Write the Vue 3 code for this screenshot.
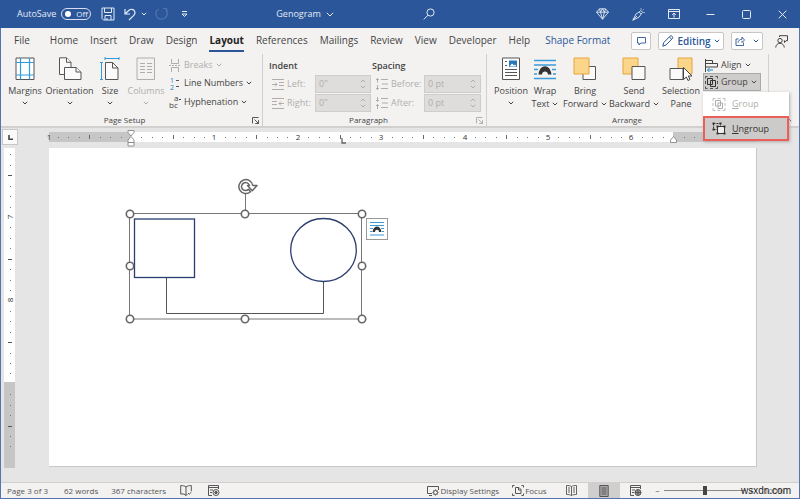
<script setup>
import { h, ref } from 'vue'

const Chevron = () =>
  h('svg', { width: 6, height: 4, viewBox: '0 0 6 4', fill: 'none', stroke: 'currentColor', 'aria-hidden': 'true' }, [
    h('path', { d: 'M.8.8 3 3 5.2.8' }),
  ])

const Launcher = () =>
  h('svg', { width: 7, height: 7, viewBox: '0 0 7 7', fill: 'none', stroke: 'currentColor', 'stroke-width': '.9', 'aria-hidden': 'true' }, [
    h('path', { d: 'M.5 6.5v-6h6M2.5 2.5l4 4M6.5 3.2v3.3H3.2' }),
  ])

const tabs = ['Home', 'Insert', 'Draw', 'Design', 'Layout', 'References', 'Mailings', 'Review', 'View', 'Developer', 'Help']
const activeTab = ref('Layout')
const menuOpen = ref(true)
const zoom = ref(100)

const inch = 83.4
const marks = (origin, from, to) => {
  const list = []
  for (let i = from; i <= to; i++) {
    const kind = i % 8 === 0 ? 'number' : i % 4 === 0 ? 'bar' : 'dot'
    list.push({ at: Math.round(origin + (i * inch) / 8), kind, label: Math.abs(i / 8) })
  }
  return list
}
const acrossMarks = marks(82, -7, 59).filter((m) => m.label !== 0 && m.label !== 6.5)
const downMarks = marks(69 - 7 * inch, 50, 78).filter((m) => m.at > 3 && m.label !== 9 && m.label < 9.8)

const handles = [
  [81, 66], [196, 66], [313, 66],
  [81, 118], [313, 118],
  [81, 171], [196, 171], [313, 171],
]
</script>

<template>
  <div class="window">
    <header class="titlebar">
      <label class="autosave">AutoSave
        <button class="toggle" type="button" role="switch" aria-checked="false"><i></i>Off</button>
      </label>
      <button class="quick save" type="button" aria-label="Save">
        <svg width="14" height="14" viewBox="0 0 14 14" fill="none" stroke="currentColor"><path d="M1 1h12v12H2.500L1 11.500zM3.500 1v4.500h7V1M4 13V8.500h6V13M6 13v-2" /></svg>
      </button>
      <button class="quick undo" type="button" aria-label="Undo">
        <svg width="12" height="13" viewBox="0 0 12 13" fill="none" stroke="currentColor" stroke-width="1.200"><path d="M1 1v5h5M1.300 5.700 5 2.200c2-1.600 4.300-1 5.300.5 1 1.600.8 3.300-.5 4.600L5 12" /></svg>
        <Chevron />
      </button>
      <button class="quick redo" type="button" aria-label="Repeat" disabled>
        <svg width="13" height="14" viewBox="0 0 13 14" fill="none" stroke="currentColor" stroke-width="1.200"><path d="M8 1.500h3.500V5M11.300 2.200C13 5 12.500 9 10 11c-3 2.300-7 1.200-8.500-1.800C.2 6.500 1.200 3.500 3.500 2" /></svg>
      </button>
      <button class="quick" type="button" aria-label="Customize toolbar">
        <svg width="7" height="7" viewBox="0 0 7 7" fill="none" stroke="currentColor"><path d="M1 .5h5M1 3l2.500 2.500L6 3z" /></svg>
      </button>
      <button class="doc-name" type="button">Genogram
        <svg width="8" height="5" viewBox="0 0 8 5" fill="none" stroke="currentColor"><path d="M.8.8 4 4 7.200.8" /></svg>
      </button>
      <button class="quick search" type="button" aria-label="Search">
        <svg width="12" height="12" viewBox="0 0 12 12" fill="none" stroke="currentColor"><circle cx="7.500" cy="4.500" r="3.600" /><path d="M5 7.200.8 11.400" /></svg>
      </button>
      <nav class="window-buttons" aria-label="Window">
        <button type="button" aria-label="Premium">
          <svg width="13" height="12" viewBox="0 0 13 12" fill="none" stroke="currentColor" stroke-width=".9"><path d="M3.500.8h6l3 3.400-6 7-6-7zM.5 4.200h12M3.500.8l1 3.400 2 7 2-7 1-3.400M4.500 4.200l2-3.400 2 3.400" /></svg>
        </button>
        <button type="button" aria-label="Designer">
          <svg width="13" height="13" viewBox="0 0 13 13" fill="none" stroke="currentColor" stroke-width=".9"><path d="M.8 12.200 4 6l3.200-2 2 2L7 9.200zM.8 12.200 5 8M7.200 4 8.700 2.500l2 2L9.200 6M9 1.500V.3M11.500 1.500l-.8.8M11.500 4.500h1.200" /></svg>
        </button>
        <button type="button" aria-label="Ribbon display options">
          <svg width="12" height="10" viewBox="0 0 12 10" fill="none" stroke="currentColor"><path d="M.5.5h11v9H.5zM.5 2.500h11M6 8.500V4.200M4.200 5.800 6 4l1.800 1.800" /></svg>
        </button>
        <button type="button" aria-label="Minimize">
          <svg width="9" height="9" viewBox="0 0 9 9" stroke="currentColor"><path d="M.5 4.500h8" /></svg>
        </button>
        <button type="button" aria-label="Maximize">
          <svg width="9" height="9" viewBox="0 0 9 9" fill="none" stroke="currentColor"><rect x=".5" y=".5" width="8" height="8" rx="1" /></svg>
        </button>
        <button type="button" aria-label="Close">
          <svg width="9" height="9" viewBox="0 0 9 9" fill="none" stroke="currentColor"><path d="m.7.7 7.600 7.600M8.300.7.7 8.300" /></svg>
        </button>
      </nav>
    </header>

    <nav class="tabs" aria-label="Ribbon tabs">
      <button class="tab file" type="button">File</button>
      <button v-for="t in tabs" :key="t" class="tab" :class="{ active: t === activeTab }" type="button" @click="activeTab = t">{{ t }}</button>
      <button class="tab context" type="button">Shape Format</button>
      <div class="tab-actions">
        <button class="boxed comment" type="button" aria-label="Comments">
          <svg width="9" height="9" viewBox="0 0 9 9" fill="none" stroke="currentColor" stroke-width=".9"><path d="M.5.5h8v5.500H4L2 8V6H.5z" /></svg>
        </button>
        <button class="boxed editing" type="button">
          <svg width="12" height="12" viewBox="0 0 12 12" fill="none" stroke="currentColor"><path d="m.8 11.200.9-3.600L8.300 1c1-.9 3.200 1 2.300 2.300L4 10zM7.300 2l2.500 2.300" /></svg>
          Editing<Chevron />
        </button>
        <button class="boxed share" type="button" aria-label="Share">
          <svg width="10" height="10" viewBox="0 0 10 10" fill="none" stroke="currentColor" stroke-width=".9"><path d="M3.500 3H1v6.500h7.500V6.500M3 6.800c.3-2.500 2-3.500 4-3.500V1l2.500 3L7 6.500V4.800" /></svg>
          <Chevron />
        </button>
        <button class="person" type="button" aria-label="Presence">
          <svg width="13" height="13" viewBox="0 0 13 13" fill="none" stroke="currentColor"><path d="M4.500 2V.7h8v5H11L9.500 7.500V5.700H8.800M.7 12.500C1 9.500 3 8.300 5 8.300s4 1.200 4.300 4.200" /><circle cx="5" cy="5.600" r="2.200" /></svg>
        </button>
      </div>
    </nav>

    <section class="ribbon">
      <div class="group page-setup">
        <div class="group-body">
          <button class="big margins" type="button">
            <svg width="20" height="24" viewBox="0 0 20 24" fill="none"><path d="M1 1h18v21.500H1z" fill="#fff" stroke="#555" /><path d="M5.500 1v21.500M14.500 1v21.500M1 5.500h18M1 18h18" stroke="#2f9bd8" stroke-width="1.200" /></svg>
            <span>Margins</span><Chevron />
          </button>
          <button class="big orientation" type="button">
            <svg width="24" height="24" viewBox="0 0 24 24" fill="#fafafa" stroke="#555"><path d="M1.500 17.500V.8h7l4.500 4.500v12.200z" /><path d="M8.500.8v4.500H13" /><path d="M6.500 22.500v-12H18l5 4.500v7.500z" /><path d="M18 10.500V15h5" /></svg>
            <span>Orientation</span><Chevron />
          </button>
          <button class="big size" type="button">
            <svg width="20" height="24" viewBox="0 0 20 24" fill="none"><path d="M5.500 22.500V5.500h7L18 11v11.500z" fill="#fafafa" stroke="#555" /><path d="M12.500 5.500V11H18" stroke="#555" /><path d="M5 1.500h14M5 0v3M19 0v3M1.500 5v18M0 5.500h3M0 22.500h3" stroke="#2f9bd8" /></svg>
            <span>Size</span><Chevron />
          </button>
          <button class="big columns" type="button" disabled>
            <svg width="20" height="24" viewBox="0 0 20 24" fill="none" stroke="currentColor"><path d="M1 1h17.500v21.500H1z" /><path d="M4 6.500h5M4 9.500h5M4 12.500h5M4 15.500h5M11 6.500h5M11 9.500h5M11 12.500h5M11 15.500h5" /></svg>
            <span>Columns</span><Chevron />
          </button>
          <div class="small-list">
            <button class="small" type="button" disabled>
              <svg width="12" height="13" viewBox="0 0 12 13" fill="none" stroke="currentColor"><path d="M2.500 0v4.500h7V0M2.500 13V8.500h7V13" /><path d="M0 6.500h12" stroke-dasharray="2 1" /></svg>
              Breaks<Chevron />
            </button>
            <button class="small" type="button">
              <svg class="glyphs" width="12" height="13" viewBox="0 0 12 13"><text x="1" y="6" font-size="7" fill="#1787cc">1</text><text x="1" y="13" font-size="7" fill="#1787cc">2</text><path d="M7 3.500h3M7 9.500h3" stroke="#555" /></svg>
              Line Numbers<Chevron />
            </button>
            <button class="small" type="button">
              <svg class="glyphs" width="12" height="13" viewBox="0 0 12 13" fill="#444"><text x="5" y="5" font-size="8">a</text><text x="0" y="12" font-size="8">bc</text><path d="M10 3.500h2" stroke="#444" /></svg>
              Hyphenation<Chevron />
            </button>
          </div>
        </div>
        <footer><span>Page Setup</span><button class="launcher" type="button" aria-label="Page setup options"><Launcher /></button></footer>
      </div>

      <div class="group paragraph">
        <div class="group-body fields">
          <strong class="field-title">Indent</strong>
          <strong class="field-title">Spacing</strong>
          <label class="field" for="left">
            <svg width="12" height="11" viewBox="0 0 12 11" fill="none" stroke="currentColor"><path d="M0 .5h12M7 3.500h5M7 6.500h5M0 10.500h12M0 5.500h5M3 3.500l2 2-2 2" /></svg>
            <span>Left:</span>
            <span class="spin"><input id="left" value='0"' disabled /><i><Chevron class="up" /><Chevron /></i></span>
          </label>
          <label class="field" for="before">
            <svg width="13" height="12" viewBox="0 0 13 12" fill="none" stroke="currentColor"><path d="M6 1.500h7M7 6h6M6 10.500h7M2.500 0v4.500M1 2l1.500-1.500L4 2M2.500 12V7M1 10l1.500 1.500L4 10" /></svg>
            <span class="wide">Before:</span>
            <span class="spin"><input id="before" value="0 pt" disabled /><i><Chevron class="up" /><Chevron /></i></span>
          </label>
          <label class="field" for="right">
            <svg width="12" height="11" viewBox="0 0 12 11" fill="none" stroke="currentColor"><path d="M0 .5h12M0 3.500h5M0 6.500h5M0 10.500h12M7 5.500h5M9 3.500l-2 2 2 2" /></svg>
            <span>Right:</span>
            <span class="spin"><input id="right" value='0"' disabled /><i><Chevron class="up" /><Chevron /></i></span>
          </label>
          <label class="field" for="after">
            <svg width="13" height="12" viewBox="0 0 13 12" fill="none" stroke="currentColor"><path d="M6 1.500h7M7 6h6M6 10.500h7M2.500 0v4.500M1 3l1.500 1.500L4 3M2.500 12V7M1 9l1.500-1.500L4 9" /></svg>
            <span class="wide">After:</span>
            <span class="spin"><input id="after" value="0 pt" disabled /><i><Chevron class="up" /><Chevron /></i></span>
          </label>
        </div>
        <footer><span>Paragraph</span><button class="launcher dim" type="button" aria-label="Paragraph options"><Launcher /></button></footer>
      </div>

      <div class="group arrange">
        <div class="group-body">
          <button class="big position" type="button">
            <svg width="20" height="24" viewBox="0 0 20 24" fill="none"><path d="M1.500 1h17v21.500h-17z" fill="#fff" stroke="#555" /><path d="M8 3.500h8V10H8z" fill="#2878b8" /><path d="m8.500 9.500 2.500-3 2 2 1-1 1.500 2z" fill="#fff" /><path d="M4 4.500h2M4 8.500h2M4 12.500h12M4 15.500h12M4 18.500h12" stroke="#555" /></svg>
            <span>Position</span><Chevron />
          </button>
          <button class="big wrap" type="button">
            <svg width="24" height="24" viewBox="0 0 24 24" fill="none"><path d="M1 3.500h22M1 8h22M1 12.500h4M19 12.500h4M1 17h3M20 17h3M1 21.500h22" stroke="#3a9bd9" stroke-width="1.300" /><path d="M5.500 17.500h3.500c0-4 6-4 6 0h3.500c-1-11-12-11-13 0z" fill="#333" /></svg>
            <span>Wrap</span><span>Text<Chevron /></span>
          </button>
          <button class="big forward" type="button">
            <svg width="24" height="24" viewBox="0 0 24 24"><path d="M10 9.500h12.500v13H10z" fill="#fafafa" stroke="#555" /><path d="M1 1h15v16H1z" fill="#fbd68a" stroke="#e8a33c" /></svg>
            <span>Bring</span><span>Forward<Chevron /></span>
          </button>
          <button class="big backward" type="button">
            <svg width="24" height="24" viewBox="0 0 24 24"><path d="M1 1h15v16H1z" fill="#fbd68a" stroke="#e8a33c" /><path d="M10 9.500h13v13H10z" fill="#fafafa" stroke="#555" /></svg>
            <span>Send</span><span>Backward<Chevron /></span>
          </button>
          <button class="big selection" type="button">
            <svg width="24" height="24" viewBox="0 0 24 24"><path d="M9 1h14v16H9z" fill="#fbd68a" stroke="#e8a33c" /><path d="M1 11.500h13v11H1z" fill="#fafafa" stroke="#555" /><path d="M14.500 10.500v12l2.800-2.500 1.700 3.500 2-1-1.700-3.500h3.700z" fill="#fff" stroke="#444" /></svg>
            <span>Selection</span><span>Pane</span>
          </button>
          <div class="arrange-list">
            <button class="small align" type="button">
              <svg width="13" height="13" viewBox="0 0 13 13" fill="none"><path d="M.5 0v13M.5 1.500h7v3h-7zM.5 4.500h12V8H.5z" stroke="#444" /><path d="M2.500 11h5.500M4.500 9l-2 2 2 2" stroke="#1787cc" /></svg>
              Align<Chevron />
            </button>
            <div class="menu-anchor">
              <button class="small group-button" type="button" :aria-expanded="menuOpen" @click="menuOpen = !menuOpen">
                <svg width="13" height="13" viewBox="0 0 13 13" fill="none" stroke="#333"><path d="M.5 2.500v-2h2M10.500.5h2v2M12.500 10.500v2h-2M2.500 12.500h-2v-2M5 .5h3M5 12.500h3M.5 5v3M12.500 5v3" stroke-width=".8" /><path d="M2.500 2.500h5v6h-5zM5.500 4.500h5v6h-5z" /></svg>
                Group<Chevron />
              </button>
              <div v-if="menuOpen" class="menu" role="menu">
                <button class="item" type="button" role="menuitem" disabled>
                  <svg width="14" height="13" viewBox="0 0 14 13" fill="none" stroke="currentColor"><path d="M1 3V.5h2.500M10.500.5H13V3M13 10v2.500h-2.500M3.500 12.500H1V10M5.500.5h3M5.500 12.500h3M1 5v3M13 5v3" stroke-width=".8" /><path d="M3.500 2.500h5v5.500h-5zM6 5h4.500v5.500H6z" /></svg>
                  <span><u>G</u>roup</span>
                </button>
                <button class="item current" type="button" role="menuitem">
                  <svg width="14" height="13" viewBox="0 0 14 13" fill="none" stroke="#333"><path d="M1.500 1.500h7v6h-7z" stroke-dasharray="2 1" /><path d="M5.500 4.500h7v7h-7z" fill="#eee" /><path d="M.5.500h2v2h-2zM7.500.500h2v2h-2zM.5 6.500h2v2h-2zM4.500 3.500h2v2h-2zM11.500 3.500h2v2h-2zM4.500 10.500h2v2h-2zM11.500 10.500h2v2h-2z" fill="#333" stroke="none" /></svg>
                  <span><u>U</u>ngroup</span>
                </button>
              </div>
            </div>
          </div>
        </div>
        <footer><span>Arrange</span></footer>
      </div>
      <button class="collapse" type="button" aria-label="Collapse ribbon"><Chevron class="up" /></button>
    </section>

    <main class="workspace">
      <button class="tab-stop" type="button" aria-label="Tab stop">
        <svg width="5" height="5" viewBox="0 0 5 5" fill="none" stroke="#444" stroke-width="1.600"><path d="M1 0v4.200h4" /></svg>
      </button>
      <svg class="ruler across" aria-hidden="true">
        <rect x="0" y="4" width="100%" height="10" fill="#c6c6c6" />
        <rect x="82" y="4" width="542" height="10" fill="#fff" />
        <template v-for="m in acrossMarks" :key="m.at">
          <text v-if="m.kind === 'number'" :x="m.at" y="12" text-anchor="middle">{{ m.label }}</text>
          <rect v-else-if="m.kind === 'bar'" :x="m.at" y="7" width="1" height="4" fill="#666" />
          <rect v-else :x="m.at" y="9" width="1" height="1" fill="#777" />
        </template>
        <text x="0" y="12" text-anchor="middle">1</text>
        <g fill="#fff" stroke="#888" stroke-width=".9">
          <path d="M79 2.500h6v2L82 8l-3-3.500zM79 14.500V12l3-3.500 3 3.500v2.500zM79 14.500h6v3.500h-6z" />
          <path d="M621.500 14.500V12l3-3.500 3 3.500v2.500z" />
        </g>
        <path d="M293 10v5h4" fill="none" stroke="#666" stroke-width="1.300" />
      </svg>
      <svg class="ruler down" aria-hidden="true">
        <rect x="3" y="0" width="11" height="320" fill="#c6c6c6" />
        <rect x="3" y="0" width="11" height="234" fill="#fff" />
        <template v-for="m in downMarks" :key="m.at">
          <text v-if="m.kind === 'number'" text-anchor="middle" :transform="`translate(12 ${m.at}) rotate(-90)`">{{ m.label }}</text>
          <rect v-else-if="m.kind === 'bar'" x="7" :y="m.at" width="4" height="1" fill="#555" />
          <rect v-else x="9" :y="m.at" width="1" height="1" fill="#777" />
        </template>
      </svg>
      <article class="page">
        <svg class="drawing" width="340" height="190" viewBox="0 0 340 190" fill="none" role="img" aria-label="Grouped genogram shapes">
          <path d="M117.500 130v35.500h157V133" stroke="#555" />
          <rect x="85.500" y="71" width="60" height="58.500" fill="#fff" stroke="#2b3e70" stroke-width="1.300" />
          <ellipse cx="274.500" cy="102" rx="32.800" ry="31.500" fill="#fff" stroke="#2b3e70" stroke-width="1.300" />
          <path d="M80.500 65.500h232v105.500h-232zM196.500 45v20" stroke="#777" />
          <circle v-for="([x, y], i) in handles" :key="i" :cx="x" :cy="y" r="3.700" fill="#fff" stroke="#666" stroke-width="1.600" />
          <path d="M201.500 43.800A7 7 0 1 1 203.800 37.500H208l-4.700 5.300-4.800-5.300h1.900A4 4 0 1 0 199.500 41.300z" fill="#fff" stroke="#666" stroke-width="1.500" stroke-linejoin="round" />
        </svg>
        <button class="layout-options" type="button" aria-label="Layout options">
          <svg width="16" height="16" viewBox="0 0 16 16" fill="none"><path d="M1 1.500h14M1 4.500h14M1 7.500h3M12 7.500h3M1 10.500h2M13 10.500h2M1 14h14" stroke="#3a9bd9" stroke-width="1.100" /><path d="M3.500 11H6c0-3 4-3 4 0h2.500c-.7-7.500-8.300-7.500-9 0z" fill="#333" /></svg>
        </button>
      </article>
    </main>

    <footer class="status">
      <span class="page-count">Page 3 of 3</span>
      <span class="words">62 words</span>
      <span>367 characters</span>
      <button class="proof" type="button" aria-label="Proofing">
        <svg width="12" height="11" viewBox="0 0 12 11" fill="none" stroke="currentColor"><path d="M6 2v8.500M6 2C4.500.7 3 .6.700.600v8.400H4l2 1.500L7.500 9M6 2C7.500.7 9 .6 11.300.6V6M8 8l1.200 1.300L11.500 7" /></svg>
      </button>
      <button class="macro" type="button" aria-label="Macros">
        <svg width="12" height="11" viewBox="0 0 12 11" fill="none" stroke="currentColor"><path d="M4 10.500H.5V.5h10V4M.5 2.500h10M2 5h3M2 7.500h2" /><circle cx="8" cy="7.500" r="3" /><circle cx="8" cy="7.500" r="1.200" fill="currentColor" /></svg>
      </button>
      <div class="view-tools">
        <button class="status-button" type="button">
          <svg width="12" height="11" viewBox="0 0 12 11" fill="none" stroke="currentColor"><path d="M5 8.500H.5v-7h11V5M2 10.500h3" /><circle cx="8.500" cy="7.500" r="2" /><path d="M8.500 4.500v1M8.500 9.500v1M5.500 7.500h1M10.500 7.500h1M6.500 5.500l.7.700M10.500 9.500l-.7-.7M10.500 5.500l-.7.700M6.500 9.500l.7-.7" /></svg>
          Display Settings
        </button>
        <button class="status-button focus" type="button">
          <svg width="12" height="11" viewBox="0 0 12 11" fill="none" stroke="currentColor"><path d="M.5 2.500v-2h2M9.500.5h2v2M11.500 8.500v2h-2M2.500 10.500h-2v-2M3.500 8.500v-6H7l2 2v4zM6.500 2.500V5H9" /></svg>
          Focus
        </button>
        <button class="view" type="button" aria-label="Read mode">
          <svg width="11" height="11" viewBox="0 0 11 11" fill="none" stroke="currentColor"><path d="M5.500 1.500v9M5.500 1.500C4 .6 2.500.5.500.5v9c2 0 3.500.1 5 1 1.500-.9 3-1 5-1v-9c-2 0-3.500.1-5 1M2 3h2M2 5h2M2 7h2M7 3h2M7 5h2M7 7h2" stroke-width=".9" /></svg>
        </button>
        <button class="view selected" type="button" aria-label="Print layout">
          <svg width="10" height="12" viewBox="0 0 10 12" fill="#aaa" stroke="#555"><path d="M.8.500h8.400v11H.8zM2.500 3h5M2.500 5h5M2.500 7h5M2.500 9h5" /></svg>
        </button>
        <button class="view" type="button" aria-label="Web layout">
          <svg width="12" height="11" viewBox="0 0 12 11" fill="none" stroke="currentColor"><path d="M4 10.500H.5V.5h10V4M.5 2.500h10M2 5h3M2 7.500h2" /><circle cx="8" cy="7.500" r="3" fill="#999" /><path d="M8 4.500v6M5 7.500h6" /></svg>
        </button>
        <button class="step" type="button" aria-label="Zoom out">−</button>
        <input v-model="zoom" class="slider" type="range" min="10" max="190" aria-label="Zoom" />
        <button class="step" type="button" aria-label="Zoom in">+</button>
        <span class="percent">{{ zoom }}%</span>
      </div>
      <span class="site">wsxdn.com</span>
    </footer>
  </div>
</template>

<style>
body {
  background: #e5e5e5;
}
</style>

<style scoped>
.window,
.window * {
  box-sizing: border-box;
}
.window {
  display: flex;
  flex-direction: column;
  min-height: 100vh;
  border: 1px solid #5674b0;
  border-top: 0;
  color: #444;
  background: #e5e5e5;
  font: 9px/12px "Open Sans", "Noto Sans", sans-serif;
}
button,
input {
  margin: 0;
  padding: 0;
  border: 0;
  background: none;
  color: inherit;
  font: inherit;
}
button {
  display: flex;
  align-items: center;
  white-space: nowrap;
}
svg {
  display: block;
  flex: none;
}
.up {
  transform: rotate(180deg);
}
.glyphs {
  overflow: visible;
}

.titlebar {
  display: flex;
  align-items: center;
  height: 28px;
  margin: 0 -1px;
  padding-left: 17px;
  background: #2b579a;
  color: #e4ebf5;
}
.autosave {
  display: flex;
  align-items: center;
  gap: 5px;
}
.toggle {
  gap: 5px;
  width: 30px;
  height: 12px;
  padding-left: 3px;
  border: 1px solid #d5dff0;
  border-radius: 6px;
  font-size: 8px;
}
.toggle i {
  width: 6px;
  height: 6px;
  border-radius: 50%;
  background: #fff;
}
.save {
  margin-left: 10px;
}
.undo {
  gap: 5px;
  margin-left: 9px;
}
.redo {
  margin: 0 13px 0 8px;
}
.redo:disabled {
  color: #4f74ae;
}
.doc-name {
  gap: 5px;
  margin-left: 88px;
}
.search {
  margin-left: 89px;
}
.window-buttons {
  display: flex;
  margin-left: auto;
}
.window-buttons button {
  justify-content: center;
  width: 36px;
  height: 28px;
}

.tabs {
  display: flex;
  align-items: center;
  gap: 12px;
  height: 26px;
  padding-left: 13px;
  background: #f3f2f1;
  font-size: 10px;
}
.tab {
  height: 22px;
  border-bottom: 2px solid transparent;
}
.file {
  margin-right: 8px;
}
.active {
  border-color: #2b579a;
  color: #222;
  font-weight: 700;
}
.context {
  margin-left: 3px;
  color: #2b579a;
}
.tab-actions {
  display: flex;
  align-items: center;
  gap: 7px;
  margin-left: auto;
  padding-right: 11px;
  color: #2b579a;
}
.boxed {
  justify-content: center;
  height: 18px;
  border: 1px solid #c8c6c4;
  border-radius: 2px;
  background: #fff;
}
.comment {
  width: 20px;
}
.editing {
  gap: 3px;
  width: 66px;
  font-weight: 600;
}
.share {
  gap: 8px;
  width: 32px;
}
.person {
  margin-left: 5px;
  color: #444;
}

.ribbon {
  display: flex;
  min-height: 74px;
  border-bottom: 2px solid #d2d0ce;
  background: #f3f2f1;
}
.group {
  display: flex;
  flex-direction: column;
  padding-top: 3px;
  border-right: 1px solid #d2d0ce;
}
.group-body {
  display: flex;
  flex: 1;
}
.group footer {
  display: flex;
  align-items: center;
  height: 12px;
  font-size: 8px;
}
.group footer span {
  flex: 1;
  text-align: center;
}
.page-setup footer span {
  padding-right: 8px;
}
.paragraph footer span {
  padding-right: 8px;
}
.arrange footer span {
  padding-right: 7px;
}
.launcher {
  margin-right: 3px;
}
.dim {
  color: #aaa;
}
.page-setup {
  width: 262px;
  padding-left: 4px;
}
.big {
  flex-direction: column;
  line-height: 13px;
}
.big > svg:first-child {
  margin-bottom: 3px;
}
.big > svg:last-child {
  margin-top: 4px;
}
.big span {
  display: flex;
  align-items: center;
  gap: 3px;
}
.margins {
  width: 40px;
}
.orientation {
  width: 49px;
}
.size {
  width: 32px;
}
.columns {
  width: 40px;
}
button:disabled {
  color: #b0aeac;
}
.small-list {
  display: flex;
  flex-direction: column;
  padding-left: 3px;
}
.small {
  gap: 3px;
  height: 18px;
  margin-bottom: 1px;
}
.small-list .small:first-child {
  height: 16px;
}
.paragraph {
  width: 224px;
  padding-left: 6px;
}
.fields {
  display: grid;
  grid-template-columns: 102px 109px;
  grid-template-rows: 17px 18px 18px;
  row-gap: 1px;
  column-gap: 1px;
}
.field-title {
  align-self: center;
  font-weight: 600;
}
.field {
  display: flex;
  align-items: center;
  gap: 3px;
  padding-left: 3px;
  color: #b0aeac;
}
.field > span:nth-of-type(1) {
  width: 25px;
}
.field > span.wide:nth-of-type(1) {
  width: 30px;
}
.spin {
  display: flex;
  flex: 1;
  height: 18px;
  padding: 0 4px 0 3px;
  border: 1px solid #cfcdcb;
  background: #dedddc;
}
.spin input {
  width: 100%;
  min-width: 0;
}
.spin i {
  display: flex;
  flex-direction: column;
  justify-content: space-evenly;
}
.arrange {
  width: 282px;
  padding-left: 6px;
}
.position {
  width: 36px;
}
.wrap {
  width: 32px;
}
.forward {
  width: 48px;
}
.backward {
  width: 50px;
}
.selection {
  width: 44px;
}
.arrange-list {
  display: flex;
  flex-direction: column;
}
.align {
  height: 16px;
  margin: 0;
  padding-left: 2px;
}
.menu-anchor {
  position: relative;
}
.group-button {
  width: 58px;
  padding-left: 1px;
  border: 1px solid #aaa;
  background: #cfcdcb;
}
.menu {
  position: absolute;
  z-index: 2;
  top: 19px;
  left: 0;
  width: 86px;
  background: #fff;
  box-shadow: 1px 1px 3px #aaa;
}
.item {
  gap: 6px;
  width: 100%;
  height: 24px;
  padding-left: 9px;
}
.current {
  height: 25px;
  padding-left: 7px;
  border: 2px solid #ea5f58;
  background: #cdcbc9;
  color: #333;
}
.collapse {
  align-self: flex-end;
  margin: 0 7px 4px auto;
}

.workspace {
  display: grid;
  flex: 1;
  grid-template-columns: 48px 1fr 42px;
  grid-template-rows: 20px 1fr;
  padding-bottom: 14px;
}
.tab-stop {
  justify-content: center;
  width: 16px;
  height: 16px;
  margin: 1px;
  border: 1px solid #c8c8c8;
  background: #fafafa;
}
.ruler {
  overflow: visible;
  fill: #333;
  font-size: 8px;
}
.across {
  width: 100%;
  height: 20px;
}
.down {
  grid-area: 2 / 1;
  width: 18px;
  height: 320px;
}
.page {
  position: relative;
  grid-area: 2 / 2;
  margin-bottom: 1px;
  border-right: 1px solid #c8c8c8;
  border-bottom: 1px solid #c8c8c8;
  background: #fff;
}
.layout-options {
  position: absolute;
  top: 70px;
  left: 317px;
  justify-content: center;
  width: 22px;
  height: 22px;
  border: 1px solid #999;
  background: #fff;
}

.status {
  position: relative;
  display: flex;
  align-items: center;
  height: 16px;
  padding-left: 6px;
  border-top: 1px solid #d0d0d0;
  background: #f3f2f1;
  color: #555;
  font-size: 8px;
}
.page-count {
  margin-right: 16px;
}
.words {
  margin-right: 13px;
}
.proof {
  margin-left: 14px;
}
.macro {
  margin-left: 16px;
}
.view-tools {
  display: flex;
  align-items: center;
  margin-left: auto;
  padding-right: 15px;
}
.status-button {
  gap: 1px;
}
.focus {
  margin: 0 9px 0 13px;
}
.view {
  justify-content: center;
  width: 32px;
  height: 15px;
}
.selected {
  background: #d0cfce;
}
.step {
  justify-content: center;
  width: 12px;
}
.slider {
  width: 82px;
  height: 10px;
  appearance: none;
  background: linear-gradient(#888, #888) center / 100% 1px no-repeat;
}
.slider::-webkit-slider-thumb {
  appearance: none;
  width: 4px;
  height: 9px;
  background: #444;
}
.percent {
  margin-left: 6px;
  color: #888;
}
.site {
  position: absolute;
  right: 8px;
  bottom: 1px;
  color: #222;
  font: 10px/12px "Liberation Sans", Arial, sans-serif;
}
</style>
